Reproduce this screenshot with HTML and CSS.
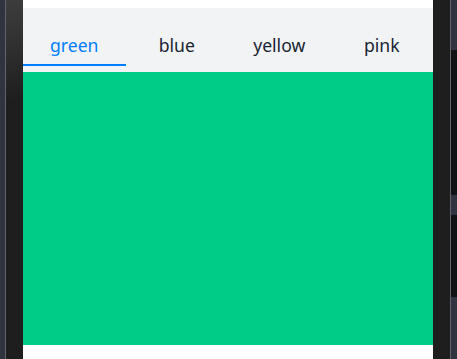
FILE: index.html
```html
<!DOCTYPE html>
<html lang="en">
<head>
<meta charset="utf-8">
<title>Tabs</title>
<link rel="stylesheet" href="styles.css">
</head>
<body>
<div class="screen">
  <div class="frame-left">
    <div class="edge-blue"></div>
    <div class="edge-line"></div>
    <div class="bezel bezel-left"></div>
  </div>
  <main class="app">
    <div class="status"></div>
    <nav class="tabbar">
      <div class="tab active">green</div>
      <div class="tab">blue</div>
      <div class="tab">yellow</div>
      <div class="tab">pink</div>
    </nav>
    <section class="panel"></section>
    <div class="footer"></div>
  </main>
  <div class="frame-right">
    <div class="bezel"></div>
    <div class="edge-line"></div>
    <div class="edge-segs">
      <div class="seg seg-a"></div>
      <div class="seg seg-b"></div>
      <div class="seg seg-c"></div>
      <div class="seg seg-d"></div>
      <div class="seg seg-e"></div>
    </div>
  </div>
</div>
</body>
</html>
```

FILE: styles.css
```css
* { box-sizing: border-box; }
html, body { margin: 0; padding: 0; }
body {
  width: 457px;
  height: 359px;
  overflow: hidden;
  background: #1e1e1e;
  font-family: "Noto Sans", "DejaVu Sans", sans-serif;
}
.screen {
  display: flex;
  width: 457px;
  height: 359px;
}
.frame-left {
  display: flex;
  width: 23px;
  flex: none;
}
.edge-blue { width: 5px; background: #2f3440; }
.edge-line { width: 1px; background: #626468; }
.bezel { flex: 1; background: #1e1e1e; }
.bezel-left {
  background: linear-gradient(165deg, #3d3d3d 0%, #333 10%, #2a2a2a 18%, #1e1e1e 28%, #1e1e1e 100%);
}
.app {
  width: 410px;
  flex: none;
  display: flex;
  flex-direction: column;
  background: #ffffff;
}
.status { height: 8px; background: #ffffff; }
.tabbar {
  display: flex;
  height: 64px;
  background: #f1f3f5;
  padding-bottom: 6px;
}
.tab {
  flex: 1;
  text-align: center;
  font-size: 17.6px;
  line-height: 24px;
  padding-top: 25px;
  color: #182431;
  border-bottom: 2px solid transparent;
}
.tab.active {
  color: #007dff;
  border-bottom-color: #007dff;
}
.panel {
  height: 273px;
  background: #00cb87;
}
.footer { flex: 1; background: #ffffff; }
.frame-right {
  display: flex;
  width: 24px;
  flex: none;
}
.frame-right .bezel { width: 17px; flex: none; }
.edge-segs {
  flex: 1;
  display: flex;
  flex-direction: column;
}
.seg-a { height: 50px; background: #2f3440; }
.seg-b { height: 145px; background: #111214; }
.seg-c { height: 20px; background: #2f3440; }
.seg-d { height: 82px; background: #111214; }
.seg-e { flex: 1; background: #2f3440; }
```
